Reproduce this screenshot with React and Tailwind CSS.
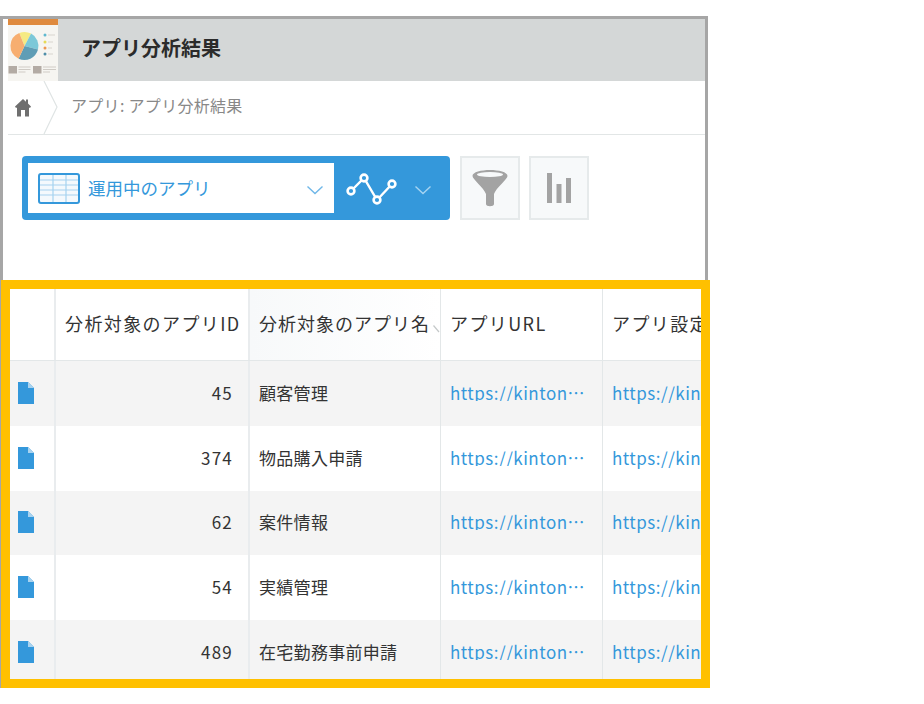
import React from "react";

const rows = [
  ["45", "顧客管理", "h-[65px] bg-[#f4f4f4]"],
  ["374", "物品購入申請", "h-[65px] bg-white"],
  ["62", "案件情報", "h-[64px] bg-[#f4f4f4]"],
  ["54", "実績管理", "h-[65px] bg-white"],
  ["489", "在宅勤務事前申請", "h-[65px] bg-[#f4f4f4]"],
];

function AppIcon() {
  return (
    <svg width="50" height="62" viewBox="0 0 50 62" className="shrink-0">
      <rect width="50" height="62" fill="#f6f5f1" />
      <rect width="50" height="6" fill="#df8a3e" />
      <path d="M16.5 27L11.3 14A14 14 0 0 1 23.1 14.6Z" fill="#f5ea84" />
      <path d="M16.5 27L23.1 14.6A14 14 0 0 1 30 30.6Z" fill="#7cc8d8" />
      <path d="M16.5 27L30 30.6A14 14 0 0 1 10.6 39.7Z" fill="#5f9db5" />
      <path d="M16.5 27L10.6 39.7A14 14 0 0 1 11.3 14Z" fill="#f7ae70" />
      <circle cx="37" cy="16" r="1.5" fill="#5fb8cf" />
      <circle cx="37" cy="23" r="1.5" fill="#e6da55" />
      <circle cx="37" cy="29" r="1.5" fill="#ee9650" />
      <circle cx="37" cy="35" r="1.5" fill="#4f8ea8" />
      <g fill="#d8d5cf">
        <rect x="40" y="15.5" width="7" height="1" />
        <rect x="40" y="22.5" width="5" height="1" />
        <rect x="40" y="28.5" width="4" height="1" />
        <rect x="40" y="34.5" width="5" height="1" />
      </g>
      <rect x="0.5" y="47" width="8.5" height="7.5" fill="#b3aba4" />
      <rect x="25" y="47" width="8.5" height="7.5" fill="#b3aba4" />
      <g fill="#cfcbc5">
        <rect x="10.5" y="47.5" width="12" height="1" />
        <rect x="10.5" y="50" width="12" height="1" />
        <rect x="10.5" y="52.5" width="7" height="1" />
        <rect x="35" y="47.5" width="13" height="1" />
        <rect x="35" y="50" width="13" height="1" />
        <rect x="35" y="52.5" width="7" height="1" />
      </g>
    </svg>
  );
}

function HomeIcon() {
  return (
    <svg width="16" height="19" viewBox="0 0 16 19">
      <path d="M8 1L11 3.8V1.5H13V5.6L16 8.4L15.2 9.8H14V18.5H10V12H6V18.5H2V9.8H0.8L0 8.4Z" fill="#6f6f6f" />
    </svg>
  );
}

function Chevron({ color }) {
  return (
    <svg width="18" height="10" viewBox="0 0 18 10">
      <path d="M1.5 1.5L9 8.5L16.5 1.5" fill="none" stroke={color} strokeWidth="1.4" />
    </svg>
  );
}

function TableIcon() {
  return (
    <svg width="42" height="31" viewBox="0 0 42 31" className="shrink-0">
      <rect x="1" y="1" width="40" height="29" rx="2" fill="#f4f9fd" />
      <g stroke="#a5d2f0" strokeWidth="1.2">
        <path d="M2 7H40M2 12H40M2 17H40M2 22H40" />
        <path d="M15 2V29M28 2V29" />
      </g>
      <rect x="1" y="1" width="40" height="29" rx="2" fill="none" stroke="#3498db" strokeWidth="2" />
    </svg>
  );
}

function LineChartIcon() {
  return (
    <svg width="52" height="36" viewBox="0 0 52 36">
      <path d="M6 21L19 8L32 30L47 14" fill="none" stroke="#fff" strokeWidth="2.4" />
      <g fill="#3498db" stroke="#fff" strokeWidth="2.6">
        <circle cx="6" cy="21" r="3.4" />
        <circle cx="19" cy="8" r="3.4" />
        <circle cx="32" cy="30" r="3.4" />
        <circle cx="47" cy="14" r="3.4" />
      </g>
    </svg>
  );
}

function FunnelIcon() {
  return (
    <svg width="36" height="38" viewBox="0 0 36 38">
      <path d="M0.5 7C0.5 -1 35.5 -1 35.5 7C35.5 10 24 19 22 25V35C22 38 14 38 14 35V25C12 19 0.5 10 0.5 7Z" fill="#a3a3a3" />
      <ellipse cx="18" cy="5.5" rx="13" ry="2.6" fill="#f7f9fa" />
    </svg>
  );
}

function BarsIcon() {
  return (
    <svg width="24" height="30" viewBox="0 0 24 30">
      <rect x="0" y="0" width="5" height="30" fill="#a3a3a3" />
      <rect x="9.5" y="11" width="5" height="19" fill="#a3a3a3" />
      <rect x="19" y="5" width="5" height="25" fill="#a3a3a3" />
    </svg>
  );
}

function DocIcon() {
  return (
    <svg width="16" height="22" viewBox="0 0 16 22">
      <path d="M0 0H10L16 6V22H0Z" fill="#3498db" />
      <path d="M10 0L16 6H10Z" fill="#a9d3ef" />
    </svg>
  );
}

function Cell({ className = "", children }) {
  return <div className={"flex items-center min-w-0 overflow-hidden " + className}>{children}</div>;
}

export default function App() {
  return (
    <div lang="ja" className="w-[924px] h-[704px] bg-white pt-4 overflow-hidden font-['Noto_Sans_CJK_JP','Noto_Sans',sans-serif]">
      <div className="relative w-[708px] h-[672px] border-x-[3px] border-t-[3px] border-[#a6a6a6] bg-white flex flex-col">
        <div className="ml-[5px] h-[62px] flex items-center bg-[#d4d7d7] shrink-0">
          <AppIcon />
          <span className="ml-[23px] mb-[4px] text-[20px] font-bold text-[#2b2b2b] leading-none">アプリ分析結果</span>
        </div>

        <div className="relative ml-[5px] h-[54px] shrink-0 flex items-center border-b-[1.5px] border-[#e2e6e6]">
          <span className="ml-[7px] flex"><HomeIcon /></span>
          <svg width="16" height="54" viewBox="0 0 16 54" className="absolute left-[35px] top-0">
            <path d="M1 0L14 26L1 53" fill="none" stroke="#dfe4e4" strokeWidth="1.2" />
          </svg>
          <span className="ml-[40px] text-[16px] tracking-[0.3px] text-[#888888] leading-none whitespace-nowrap mb-[5px]">アプリ: アプリ分析結果</span>
        </div>

        <div className="ml-[19px] mt-[21px] flex items-stretch h-16 shrink-0">
          <div className="w-[428px] bg-[#3498db] rounded-[4px] flex items-center pl-[6px]">
            <div className="w-[306px] h-[50px] bg-white flex items-center pl-[10px]">
              <TableIcon />
              <span className="ml-[8px] text-[17.5px] text-[#3498db] leading-none whitespace-nowrap">運用中のアプリ</span>
              <span className="ml-[95px] flex mt-[3px]"><Chevron color="#6fb7e8" /></span>
            </div>
            <span className="ml-[11px] flex"><LineChartIcon /></span>
            <span className="ml-[17px] flex mt-[3px]"><Chevron color="#a6d4f2" /></span>
          </div>
          <div className="ml-[10px] w-[60px] bg-[#f7f9fa] border-2 border-[#e6eaeb] flex items-center justify-center">
            <FunnelIcon />
          </div>
          <div className="ml-[9px] w-[60px] bg-[#f7f9fa] border-2 border-[#e6eaeb] flex items-center justify-center">
            <BarsIcon />
          </div>
        </div>

        <div className="relative mt-[69px] ml-[7px] mr-[4px] overflow-hidden text-[17px] text-[#333333] leading-none">
          <div className="grid grid-cols-[46px_194px_191px_162px_98px] w-[691px] h-[72px] border-b-[1.5px] border-[#e3e7e8] text-[18px] tracking-[1.4px]">
            <Cell className="border-r-2 border-[#e9ecee]" />
            <Cell className="border-r-2 border-[#e9ecee] pl-[9px] pb-[3px] whitespace-nowrap">分析対象のアプリID</Cell>
            <Cell className="relative border-r border-[#e3e7e8] pl-[9px] pb-[3px] whitespace-nowrap tracking-[1px] bg-linear-to-r from-[#f7f9fa] to-white">
              分析対象のアプリ名
              <svg width="7" height="8" viewBox="0 0 7 8" className="absolute right-[0px] top-[36px]">
                <path d="M0.5 0.5L6 7" fill="none" stroke="#c4c8c9" strokeWidth="1.2" />
              </svg>
            </Cell>
            <Cell className="border-r border-[#e3e7e8] pl-[9px] pb-[3px] whitespace-nowrap">アプリURL</Cell>
            <Cell className="pl-[9px] pb-[3px] whitespace-nowrap">アプリ設定</Cell>
          </div>
          {rows.map(([id, name, rowClass]) => (
            <div key={id} className={"grid grid-cols-[46px_194px_191px_162px_98px] w-[691px] " + rowClass}>
              <Cell className="border-r-2 border-[#e9ecee] pl-[8px] pb-[2px]">
                <DocIcon />
              </Cell>
              <Cell className="border-r-2 border-[#e9ecee] justify-end pr-[15px] pb-[3px] tracking-[1.2px]">{id}</Cell>
              <Cell className="border-r border-[#e3e7e8] pl-[9px] pb-[3px] tracking-[0.3px] whitespace-nowrap">{name}</Cell>
              <Cell className="border-r border-[#e3e7e8] pl-[9px] pr-[13px] pb-[3px] tracking-[0.5px]">
                <span className="truncate text-[#3498db]">https://kintone.cybozu.com/k/</span>
              </Cell>
              <Cell className="pl-[9px] pb-[3px] tracking-[0.5px] whitespace-nowrap">
                <span className="text-[#3498db]">https://kin</span>
              </Cell>
            </div>
          ))}
        </div>

        <div className="absolute left-[-2px] top-[261px] w-[709px] h-[408px] border-[9px] border-[#ffc000] pointer-events-none" />
      </div>
    </div>
  );
}
